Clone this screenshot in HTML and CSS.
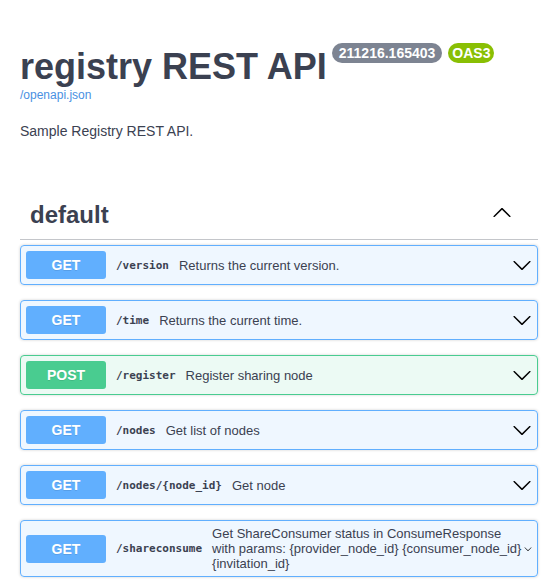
FILE: index.html
```html
<!DOCTYPE html>
<html lang="en">
<head>
<meta charset="utf-8">
<title>registry REST API</title>
<link rel="stylesheet" href="styles.css">
</head>
<body>
<div class="wrapper">
  <section class="info">
    <div class="title-row">
      <h2 class="title">registry REST API</h2>
      <span class="badge badge-version">211216.165403</span>
      <span class="badge badge-oas">OAS3</span>
    </div>
    <a class="spec-link" href="#">/openapi.json</a>
    <p class="description">Sample Registry REST API.</p>
  </section>

  <section class="tag-section">
    <h3 class="tag">
      <span class="tag-name">default</span>
      <span class="tag-toggle">
        <svg class="arrow" viewBox="0 0 20 20" width="20" height="20"><g transform="rotate(180 10 10)"><path d="M17.418 6.109c.272-.268.709-.268.979 0s.271.701 0 .969l-7.908 7.83c-.27.268-.707.268-.979 0l-7.908-7.83c-.27-.268-.27-.701 0-.969.271-.268.709-.268.979 0L10 13.25l7.418-7.141z"/></g></svg>
      </span>
    </h3>

    <div class="opblock opblock-get">
      <span class="method">GET</span>
      <span class="path">/version</span>
      <span class="summary">Returns the current version.</span>
      <svg class="arrow" viewBox="0 0 20 20" width="20" height="20"><path d="M17.418 6.109c.272-.268.709-.268.979 0s.271.701 0 .969l-7.908 7.83c-.27.268-.707.268-.979 0l-7.908-7.83c-.27-.268-.27-.701 0-.969.271-.268.709-.268.979 0L10 13.25l7.418-7.141z"/></svg>
    </div>

    <div class="opblock opblock-get">
      <span class="method">GET</span>
      <span class="path">/time</span>
      <span class="summary">Returns the current time.</span>
      <svg class="arrow" viewBox="0 0 20 20" width="20" height="20"><path d="M17.418 6.109c.272-.268.709-.268.979 0s.271.701 0 .969l-7.908 7.83c-.27.268-.707.268-.979 0l-7.908-7.83c-.27-.268-.27-.701 0-.969.271-.268.709-.268.979 0L10 13.25l7.418-7.141z"/></svg>
    </div>

    <div class="opblock opblock-post">
      <span class="method">POST</span>
      <span class="path">/register</span>
      <span class="summary">Register sharing node</span>
      <svg class="arrow" viewBox="0 0 20 20" width="20" height="20"><path d="M17.418 6.109c.272-.268.709-.268.979 0s.271.701 0 .969l-7.908 7.83c-.27.268-.707.268-.979 0l-7.908-7.83c-.27-.268-.27-.701 0-.969.271-.268.709-.268.979 0L10 13.25l7.418-7.141z"/></svg>
    </div>

    <div class="opblock opblock-get">
      <span class="method">GET</span>
      <span class="path">/nodes</span>
      <span class="summary">Get list of nodes</span>
      <svg class="arrow" viewBox="0 0 20 20" width="20" height="20"><path d="M17.418 6.109c.272-.268.709-.268.979 0s.271.701 0 .969l-7.908 7.83c-.27.268-.707.268-.979 0l-7.908-7.83c-.27-.268-.27-.701 0-.969.271-.268.709-.268.979 0L10 13.25l7.418-7.141z"/></svg>
    </div>

    <div class="opblock opblock-get">
      <span class="method">GET</span>
      <span class="path">/nodes/{node_id}</span>
      <span class="summary">Get node</span>
      <svg class="arrow" viewBox="0 0 20 20" width="20" height="20"><path d="M17.418 6.109c.272-.268.709-.268.979 0s.271.701 0 .969l-7.908 7.83c-.27.268-.707.268-.979 0l-7.908-7.83c-.27-.268-.27-.701 0-.969.271-.268.709-.268.979 0L10 13.25l7.418-7.141z"/></svg>
    </div>

    <div class="opblock opblock-get">
      <span class="method">GET</span>
      <span class="path">/shareconsume</span>
      <span class="summary">Get ShareConsumer status in ConsumeResponse with params: {provider_node_id} {consumer_node_id} {invitation_id}</span>
      <svg class="arrow arrow-shrunk" viewBox="0 0 20 20" width="8" height="8"><path d="M17.418 6.109c.272-.268.709-.268.979 0s.271.701 0 .969l-7.908 7.83c-.27.268-.707.268-.979 0l-7.908-7.83c-.27-.268-.27-.701 0-.969.271-.268.709-.268.979 0L10 13.25l7.418-7.141z"/></svg>
    </div>
  </section>
</div>
</body>
</html>
```

FILE: styles.css
```css
* {
  box-sizing: border-box;
}

html, body {
  margin: 0;
  padding: 0;
  background: #ffffff;
}

body {
  font-family: "Liberation Sans", Arial, sans-serif;
  color: #3b4151;
}

.wrapper {
  width: 538px;
  padding-left: 20px;
}

.info {
  padding-top: 46px;
}

.title-row {
  display: flex;
  align-items: flex-start;
}

.title {
  margin: 0;
  font-size: 36px;
  line-height: 42px;
  font-weight: 700;
  color: #3b4151;
}

.badge {
  display: inline-block;
  margin-top: -3px;
  height: 20px;
  line-height: 20px;
  font-size: 14px;
  font-weight: 700;
  color: #ffffff;
  border-radius: 10px;
}

.badge-version {
  margin-left: 5px;
  padding: 0 7px;
  background: #7d8492;
}

.badge-oas {
  margin-left: 6px;
  padding: 0 4px;
  background: #89bf04;
}

.spec-link {
  display: block;
  font-size: 12px;
  line-height: 14px;
  color: #4990e2;
  text-decoration: none;
}

.description {
  margin: 21px 0 0;
  font-size: 14px;
  line-height: 16px;
  color: #3b4151;
}

.tag-section {
  margin-top: 51px;
}

.tag {
  display: flex;
  align-items: flex-start;
  justify-content: space-between;
  margin: 0 0 5px;
  padding: 10px 26px 10px 10px;
  border-bottom: 1px solid rgba(59, 65, 81, 0.3);
  font-size: 24px;
  line-height: 29px;
  font-weight: 700;
  color: #3b4151;
}

.tag-toggle {
  display: flex;
  margin-top: 3px;
}

.arrow {
  display: block;
  flex: none;
  fill: #000000;
}

.opblock {
  display: flex;
  align-items: center;
  margin-bottom: 15px;
  padding: 5px;
  border: 1px solid #61affe;
  border-radius: 4px;
  box-shadow: 0 0 3px rgba(0, 0, 0, 0.19);
}

.opblock-get {
  background: rgba(97, 175, 254, 0.1);
  border-color: #61affe;
}

.opblock-post {
  background: rgba(73, 204, 144, 0.1);
  border-color: #49cc90;
}

.method {
  flex: none;
  width: 80px;
  padding: 6px 0;
  border-radius: 3px;
  font-size: 14px;
  line-height: 16px;
  font-weight: 700;
  text-align: center;
  color: #ffffff;
  text-shadow: 0 1px 0 rgba(0, 0, 0, 0.1);
}

.opblock-get .method {
  background: #61affe;
}

.opblock-post .method {
  background: #49cc90;
}

.path {
  flex: none;
  padding: 0 10px;
  font-family: "DejaVu Sans Mono", "Liberation Mono", monospace;
  font-size: 11px;
  font-weight: 700;
  color: #3b4151;
}

.summary {
  flex: 1 1 auto;
  font-size: 13px;
  line-height: 15px;
  color: #3b4151;
}

.arrow-shrunk {
  width: 8px;
  height: 8px;
}
```
